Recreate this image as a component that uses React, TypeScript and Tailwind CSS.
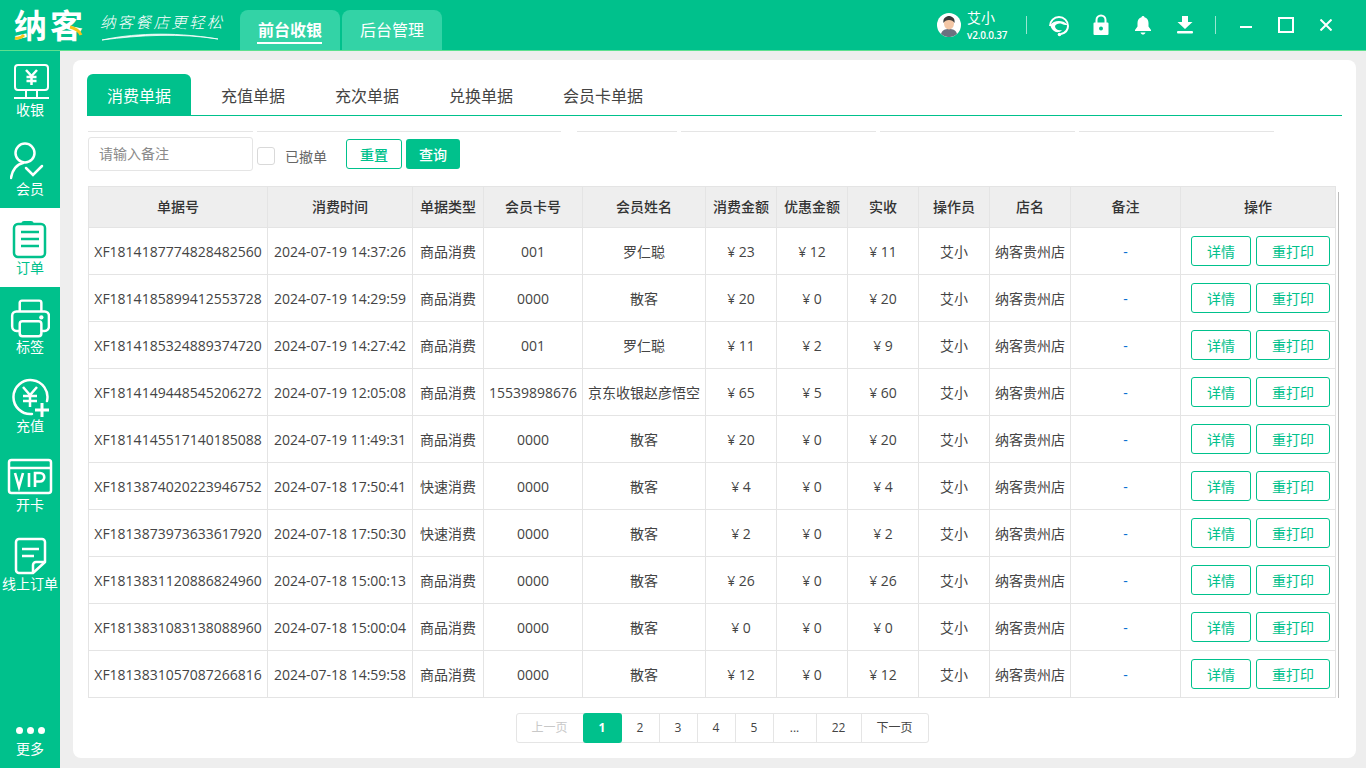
import React from 'react';

const FONT = '"Open Sans", "Noto Sans CJK SC", sans-serif';

const ROWS = [
  ['XF1814187774828482560', '2024-07-19 14:37:26', '商品消费', '001', '罗仁聪', '23', '12', '11'],
  ['XF1814185899412553728', '2024-07-19 14:29:59', '商品消费', '0000', '散客', '20', '0', '20'],
  ['XF1814185324889374720', '2024-07-19 14:27:42', '商品消费', '001', '罗仁聪', '11', '2', '9'],
  ['XF1814149448545206272', '2024-07-19 12:05:08', '商品消费', '15539898676', '京东收银赵彦悟空', '65', '5', '60'],
  ['XF1814145517140185088', '2024-07-19 11:49:31', '商品消费', '0000', '散客', '20', '0', '20'],
  ['XF1813874020223946752', '2024-07-18 17:50:41', '快速消费', '0000', '散客', '4', '0', '4'],
  ['XF1813873973633617920', '2024-07-18 17:50:30', '快速消费', '0000', '散客', '2', '0', '2'],
  ['XF1813831120886824960', '2024-07-18 15:00:13', '商品消费', '0000', '散客', '26', '0', '26'],
  ['XF1813831083138088960', '2024-07-18 15:00:04', '商品消费', '0000', '散客', '0', '0', '0'],
  ['XF1813831057087266816', '2024-07-18 14:59:58', '商品消费', '0000', '散客', '12', '0', '12'],
];

const COLUMNS: [string, string][] = [
  ['单据号', 'w-[179px]'],
  ['消费时间', 'w-[145px]'],
  ['单据类型', 'w-[71px]'],
  ['会员卡号', 'w-[99px]'],
  ['会员姓名', 'w-[123px]'],
  ['消费金额', 'w-[71px]'],
  ['优惠金额', 'w-[71px]'],
  ['实收', 'w-[71px]'],
  ['操作员', 'w-[71px]'],
  ['店名', 'w-[81px]'],
  ['备注', 'w-[110px]'],
  ['操作', 'w-[155px]'],
];

const TABS = ['消费单据', '充值单据', '充次单据', '兑换单据', '会员卡单据'];

const CASHIER = (
  <svg width="40" height="40" viewBox="0 0 40 40" fill="none" stroke="currentColor" strokeWidth="2">
    <rect x="2" y="2" width="33" height="25" rx="3" />
    <path d="M1 35h35M13 27v8M24 27v8" />
    <path d="M13 7l5.500 6 5.500-6M18.500 13v9M13.500 14h10M13.500 18h10" strokeWidth="2.500" />
  </svg>
);

const MEMBER = (
  <svg width="40" height="40" viewBox="0 0 40 40" fill="none" stroke="currentColor" strokeWidth="2.500">
    <circle cx="15" cy="12" r="9.500" />
    <path d="M1 37c1-8 6-14 12-15" strokeLinecap="round" />
    <path d="M16 27l7 7 9-9" strokeLinecap="round" />
  </svg>
);

const ORDER = (
  <svg width="40" height="40" viewBox="0 0 40 40" fill="none" stroke="currentColor" strokeWidth="2.500">
    <rect x="4" y="4" width="31" height="33" rx="4" />
    <rect x="12" y="1.500" width="11" height="3" rx="1.500" fill="currentColor" strokeWidth="1" />
    <path d="M11 12h18M11 19h18M11 26h18" />
  </svg>
);

const PRINTER = (
  <svg width="40" height="40" viewBox="0 1.500 37 37" fill="none" stroke="currentColor" strokeWidth="2.300">
    <path d="M9 13V5a2 2 0 0 1 2-2h16a2 2 0 0 1 2 2v8" />
    <path d="M9 31H6a4 4 0 0 1-4-4V17a4 4 0 0 1 4-4h26a4 4 0 0 1 4 4v10a4 4 0 0 1-4 4h-3" />
    <rect x="9" y="22" width="20" height="14" rx="2.500" />
    <circle cx="29" cy="18.500" r="2" fill="currentColor" stroke="none" />
  </svg>
);

const RECHARGE = (
  <svg width="40" height="40" viewBox="-2 0 40 40" fill="none" stroke="currentColor" strokeWidth="2.500">
    <path d="M35 23A17 17 0 1 0 20 36" strokeLinecap="round" />
    <path d="M11 9l7 8 7-8M18 17v12M11 18h14M11 23h14" />
    <path d="M23 32h14M30 25v14" strokeWidth="3" />
  </svg>
);

const VIP = (
  <svg width="46" height="40" viewBox="0 0 46 40" fill="none" stroke="currentColor" strokeWidth="2.500">
    <rect x="2" y="3" width="42" height="33" rx="2.500" />
    <path d="M2 11h42" />
    <path d="M8 16l4 14 4-14M22 16v14M28 30V16h5a4 4 0 0 1 0 8.500h-5" strokeWidth="2.600" />
  </svg>
);

const ONLINE = (
  <svg width="40" height="40" viewBox="0 0 40 40" fill="none" stroke="currentColor" strokeWidth="2.500">
    <path d="M23 37H9a3 3 0 0 1-3-3V6a3 3 0 0 1 3-3h23a3 3 0 0 1 3 3v20z" strokeLinejoin="round" />
    <path d="M23 37V29a3 3 0 0 1 3-3h9" />
    <path d="M12 13h17M12 20h12" />
  </svg>
);

const NAV_ITEMS: { label: string; icon: React.ReactNode; active?: boolean }[] = [
  { label: '收银', icon: CASHIER },
  { label: '会员', icon: MEMBER },
  { label: '订单', icon: ORDER, active: true },
  { label: '标签', icon: PRINTER },
  { label: '充值', icon: RECHARGE },
  { label: '开卡', icon: VIP },
  { label: '线上订单', icon: ONLINE },
];

function Logo() {
  return (
    <div className="flex items-center w-[240px] h-full">
      <div className="relative ml-[14px] w-[74px] h-[36px] mt-[2px]">
        <span className="block text-[33px] leading-[36px] font-bold text-white tracking-[3px] whitespace-nowrap">纳客</span>
        <svg className="absolute left-0 top-0" width="74" height="36" viewBox="0 0 74 36" fill="none">
          <path d="M1 30c3 1 7-1 9-3" stroke="#f5c518" strokeWidth="3" />
          <path d="M56 19c4 1 9 3 11 8" stroke="#f5c518" strokeWidth="3" />
        </svg>
      </div>
      <div className="relative ml-[12px] w-[126px] h-[30px]">
        <span className="block text-[15.500px] leading-[24px] italic font-light text-white tracking-[2.300px] whitespace-nowrap">纳客餐店更轻松</span>
        <svg className="absolute left-0 top-[20px]" width="126" height="12" viewBox="0 0 126 12" fill="none">
          <path d="M2 10C30 4 70 1 118 9C80 3 40 5 2 10Z" fill="#fff" stroke="#fff" strokeWidth="0.800" />
        </svg>
      </div>
    </div>
  );
}

function Avatar() {
  return (
    <svg width="24" height="24" viewBox="0 0 24 24">
      <circle cx="12" cy="12" r="12" fill="#fff" />
      <path d="M4 21c1-4 4-5 8-5s7 1 8 5a12 12 0 0 1-16 0z" fill="#6b7280" />
      <ellipse cx="12" cy="10.500" rx="5" ry="6" fill="#f3c6a5" />
      <path d="M6.500 10c-1-5 3-7 5.500-7s6.500 2 5.500 7c-1-2-3-3-5.500-3s-4.500 1-5.500 3z" fill="#3a3a3a" />
    </svg>
  );
}

function HeaderIcons() {
  return (
    <div className="flex items-center">
      <svg className="ml-[21px]" width="22" height="23" viewBox="0 0 22 23" fill="none">
        <path d="M2 12a9 9 0 0 1 18 0c0 4-3 7-7 8" stroke="#fff" strokeWidth="2" />
        <path d="M2.500 11c3-5 12-5.500 17-.500-1.500 1-3.500.500-5.500-.500-3-1-6 0-7 2 0 3 3 5 7 4-2 2.500-5 3-8 1-2.500-2-3.500-4-3.500-6z" fill="#fff" />
        <circle cx="11.500" cy="20.500" r="1.800" fill="#fff" />
      </svg>
      <svg className="ml-[23px]" width="16" height="22" viewBox="0 0 16 22" fill="none">
        <path d="M3.500 9V6a4.500 4.500 0 0 1 9 0v3" stroke="#fff" strokeWidth="2" />
        <path d="M1.500 8.500h13a1 1 0 0 1 1 1V20a1 1 0 0 1-1 1h-13a1 1 0 0 1-1-1V9.500a1 1 0 0 1 1-1z" fill="#fff" />
        <circle cx="8" cy="14.500" r="2" fill="#00c18c" />
      </svg>
      <svg className="ml-[26px]" width="16" height="20" viewBox="0 0 16 20" fill="#fff">
        <path d="M8 1a1.500 1.500 0 0 1 1.500 1.300C12 3 13.500 5 13.500 8v3.500L16 15v1H0v-1l2.500-3.500V8c0-3 1.500-5 4-5.700A1.500 1.500 0 0 1 8 1z" />
        <path d="M5.500 17.500h5c-.5 1.500-1.500 2-2.500 2s-2-.5-2.500-2z" />
      </svg>
      <svg className="ml-[26px]" width="16" height="18" viewBox="0 0 16 18" fill="#fff">
        <path d="M5 0h6v6h4.500L8 13 .5 6H5z" />
        <rect x="0" y="15" width="16" height="2.500" rx="1" />
      </svg>
    </div>
  );
}

function WindowControls() {
  return (
    <div className="flex items-center">
      <svg className="ml-[24px]" width="12" height="12" viewBox="0 0 12 12">
        <rect y="7" width="12" height="2" fill="#fff" />
      </svg>
      <svg className="ml-[26px]" width="16" height="16" viewBox="0 0 16 16" fill="none">
        <rect x="1" y="1" width="14" height="14" stroke="#fff" strokeWidth="2" />
      </svg>
      <svg className="ml-[26px]" width="12" height="12" viewBox="0 0 12 12" fill="none">
        <path d="M.5.500l11 11M11.500.500l-11 11" stroke="#fff" strokeWidth="2" />
      </svg>
    </div>
  );
}

function Header() {
  return (
    <header className="flex h-[51px] shrink-0 items-stretch bg-[#00c18c] border-b border-[#5fe08f]">
      <Logo />
      <nav className="flex items-end gap-[2px] h-full">
        <div className="relative flex h-[40px] w-[100px] items-center justify-center rounded-t-lg bg-[#33d3a6] text-[16px] font-bold text-white">
          前台收银
          <span className="absolute left-[17px] right-[18px] top-[32px] h-[2px] bg-white" />
        </div>
        <div className="flex h-[40px] w-[100px] items-center justify-center rounded-t-lg bg-[#33d3a6] text-[16px] text-white">
          后台管理
        </div>
      </nav>
      <div className="ml-auto flex items-center pr-[34px]">
        <Avatar />
        <div className="ml-[6px] w-[46px] text-white">
          <div className="text-[14px] leading-[18px]">艾小</div>
          <div className="text-[10px] leading-[14px] mt-[1px] font-semibold tracking-[-0.2px] whitespace-nowrap">v2.0.0.37</div>
        </div>
        <span className="ml-[13px] h-[18px] w-px bg-white/60" />
        <HeaderIcons />
        <span className="ml-[22px] h-[18px] w-px bg-white/60" />
        <WindowControls />
      </div>
    </header>
  );
}

function Sidebar() {
  return (
    <aside className="flex w-[60px] shrink-0 flex-col bg-[#00c18c] text-white">
      <div className="h-[78px] flex flex-col items-center">
        <span className="mt-[12px] block h-[40px] ml-[5px]">{CASHIER}</span>
        <span className="text-[14px] leading-[18px] mt-[-2px] whitespace-nowrap">收银</span>
      </div>
      {NAV_ITEMS.slice(1).map((item) => (
        <div
          key={item.label}
          className={`h-[79px] flex flex-col items-center ${item.active ? 'bg-white text-[#00c18c]' : ''}`}
        >
          <span className="mt-[12px] block h-[40px]">{item.icon}</span>
          <span className="text-[14px] leading-[18px] mt-[-1px] whitespace-nowrap">{item.label}</span>
        </div>
      ))}
      <div className="mt-auto flex flex-col items-center pb-[10px]">
        <div className="flex gap-[4px]">
          <span className="h-[7px] w-[7px] rounded-full bg-white" />
          <span className="h-[7px] w-[7px] rounded-full bg-white" />
          <span className="h-[7px] w-[7px] rounded-full bg-white" />
        </div>
        <span className="text-[14px] leading-[18px] mt-[6px]">更多</span>
      </div>
    </aside>
  );
}

function FilterBar() {
  return (
    <>
      <div className="mt-[15px] flex h-px gap-[4px] pl-[1px]">
        <span className="w-[165px] bg-[#e5e5e5]" />
        <span className="w-[304px] bg-[#e5e5e5]" />
        <span className="ml-[12px] w-[100px] bg-[#e5e5e5]" />
        <span className="w-[195px] bg-[#e5e5e5]" />
        <span className="w-[195px] bg-[#e5e5e5]" />
        <span className="w-[195px] bg-[#e5e5e5]" />
      </div>
      <div className="mt-[5px] flex items-start pl-[1px]">
        <div className="flex h-[34px] w-[165px] items-center rounded-[3px] border border-[#e5e5e5] px-[10px] pb-[2px] text-[14px] text-[#8a8a8a]">
          请输入备注
        </div>
        <span className="ml-[4px] mt-[10px] h-[18px] w-[18px] rounded-[3px] border border-[#d9d9d9]" />
        <span className="ml-[10px] mt-[10px] text-[14px] leading-[20px] text-[#666]">已撤单</span>
        <button className="ml-[19px] mt-[2px] h-[30px] w-[56px] rounded-[3px] border border-[#00c18c] text-[14px] font-medium text-[#00c18c]">
          重置
        </button>
        <button className="ml-[4px] mt-[2px] h-[30px] w-[54px] rounded-[3px] bg-[#00c18c] text-[14px] font-medium text-white">
          查询
        </button>
      </div>
    </>
  );
}

const CELL = 'border border-[#e4e4e4] p-0 text-center text-[14px] whitespace-nowrap';

function OrderTable() {
  return (
    <div className="relative mt-[15px] pl-[1px]">
      <table className="table-fixed border-collapse w-[1248px] text-[#444]">
        <colgroup>
          {COLUMNS.map(([label, width]) => (
            <col key={label} className={width} />
          ))}
        </colgroup>
        <thead>
          <tr className="h-[41px] bg-[#eeeeee]">
            {COLUMNS.map(([label]) => (
              <th key={label} className="border border-[#e4e4e4] p-0 pb-[2px] text-[14px] font-medium text-[#333]">
                {label}
              </th>
            ))}
          </tr>
        </thead>
        <tbody>
          {ROWS.map((row) => (
            <tr key={row[0]} className="h-[47px]">
              <td className={CELL}>{row[0]}</td>
              <td className={CELL}>{row[1]}</td>
              <td className={CELL}>{row[2]}</td>
              <td className={CELL}>{row[3]}</td>
              <td className={CELL}>{row[4]}</td>
              <td className={CELL}>¥ {row[5]}</td>
              <td className={CELL}>¥ {row[6]}</td>
              <td className={CELL}>¥ {row[7]}</td>
              <td className={CELL}>艾小</td>
              <td className={CELL}>纳客贵州店</td>
              <td className={`${CELL} text-[#0a6fd0]`}>-</td>
              <td className="border border-[#e4e4e4] p-0">
                <div className="flex justify-center gap-[5px] pl-[5px]">
                  <button className="h-[30px] w-[60px] rounded-[3px] border border-[#00c18c] text-[14px] text-[#00c18c]">详情</button>
                  <button className="h-[30px] w-[74px] rounded-[3px] border border-[#00c18c] text-[14px] text-[#00c18c]">重打印</button>
                </div>
              </td>
            </tr>
          ))}
        </tbody>
      </table>
      <span className="absolute left-[1251px] top-[6px] bottom-0 w-px bg-[#bbbbbb]" />
    </div>
  );
}

function Pagination() {
  const pages: [string, string][] = [
    ['2', 'w-[38px]'],
    ['3', 'w-[38px]'],
    ['4', 'w-[38px]'],
    ['5', 'w-[38px]'],
    ['...', 'w-[43px]'],
    ['22', 'w-[45px]'],
  ];
  return (
    <div className="mt-[15px] flex justify-center">
      <div className="ml-[15px] flex h-[30px] rounded-[3px] border border-[#e5e5e5] text-[12px] text-[#444]">
        <span className="flex w-[66px] items-center justify-center text-[#c8c8c8]">上一页</span>
        <span className="mt-[-1px] flex h-[30px] w-[39px] items-center justify-center rounded-[3px] bg-[#00c18c] font-bold text-white">1</span>
        {pages.map(([label, width]) => (
          <span key={label} className={`flex ${width} items-center justify-center border-r border-[#e5e5e5]`}>
            {label}
          </span>
        ))}
        <span className="flex w-[66px] items-center justify-center">下一页</span>
      </div>
    </div>
  );
}

export default function App() {
  return (
    <div className="flex h-[768px] w-[1366px] flex-col overflow-hidden bg-[#eeeeee]" style={{ fontFamily: FONT }}>
      <Header />
      <div className="flex min-h-0 flex-1">
        <Sidebar />
        <main className="mb-[10px] ml-[13px] mr-[10px] mt-[9px] flex-1 rounded-lg bg-white pl-[14px] pr-[14px] pt-[14px]">
          <div className="flex gap-[10px] border-b border-[#00c18c]">
            {TABS.map((tab, i) => (
              <div
                key={tab}
                className={`flex h-[41px] items-center justify-center rounded-t-md px-[20px] pt-[2px] text-[16px] whitespace-nowrap ${
                  i === 0 ? 'bg-[#00c18c] text-white' : 'text-[#444]'
                }`}
              >
                {tab}
              </div>
            ))}
          </div>
          <FilterBar />
          <OrderTable />
          <Pagination />
        </main>
      </div>
    </div>
  );
}
